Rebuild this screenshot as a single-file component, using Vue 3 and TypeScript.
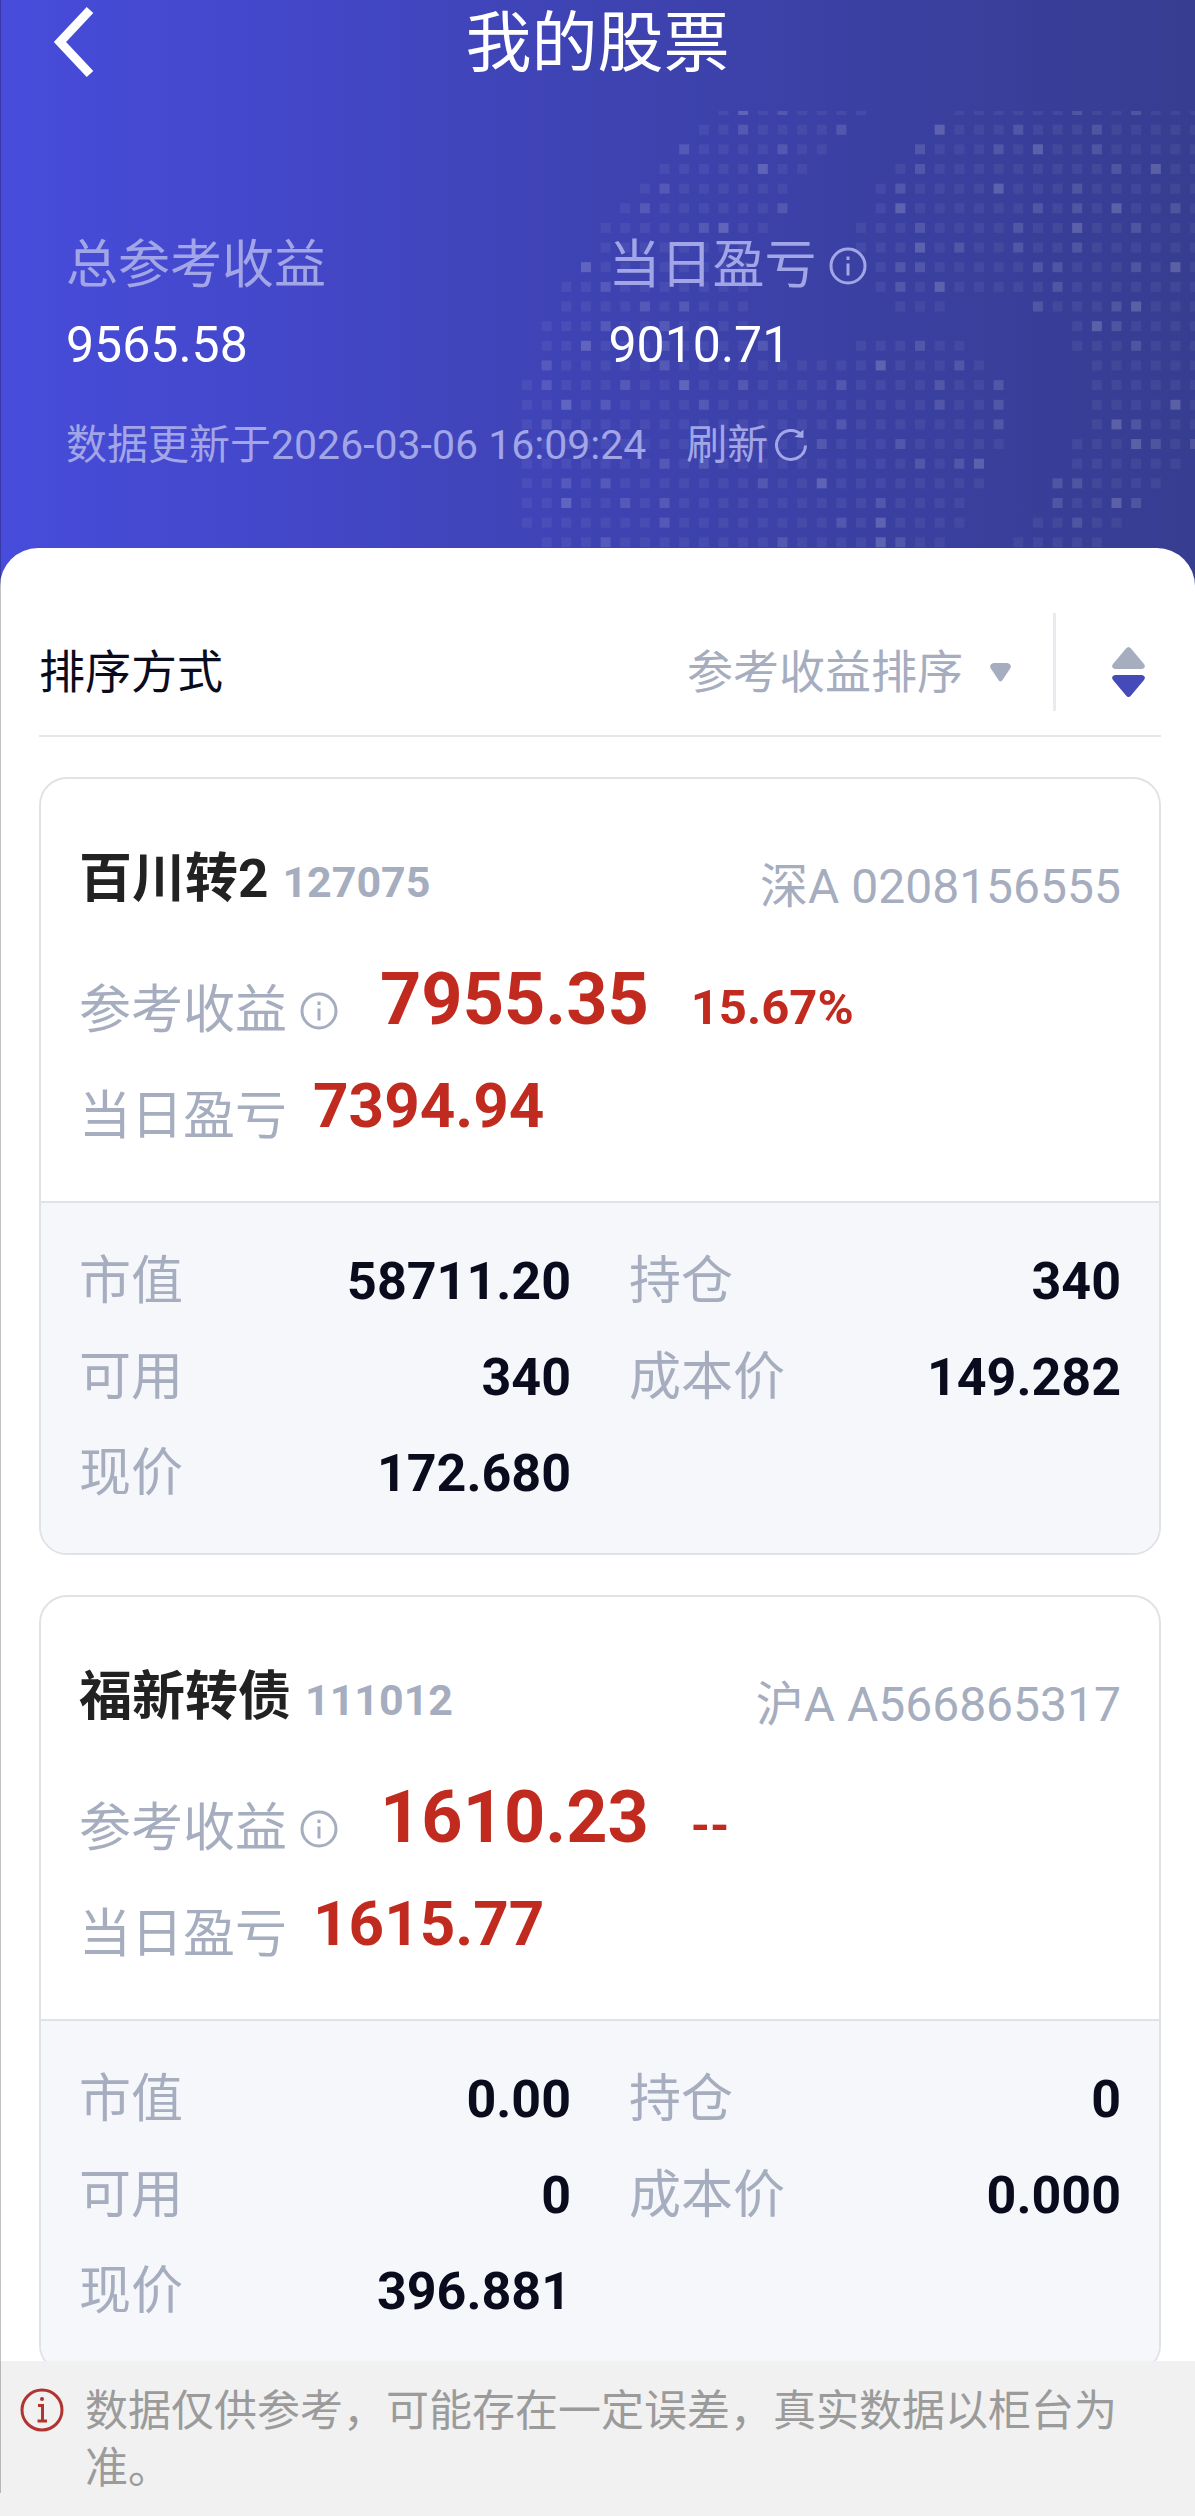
<script setup lang="ts">
import { ref } from 'vue'

interface Detail {
  label: string
  value: string
}

interface Holding {
  name: string
  code: string
  account: string
  profit: string
  rate: string
  daily: string
  details: Detail[]
}

const holdings: Holding[] = [
  {
    name: '百川转2',
    code: '127075',
    account: '深A 0208156555',
    profit: '7955.35',
    rate: '15.67%',
    daily: '7394.94',
    details: [
      { label: '市值', value: '58711.20' },
      { label: '持仓', value: '340' },
      { label: '可用', value: '340' },
      { label: '成本价', value: '149.282' },
      { label: '现价', value: '172.680' },
    ],
  },
  {
    name: '福新转债',
    code: '111012',
    account: '沪A A566865317',
    profit: '1610.23',
    rate: '--',
    daily: '1615.77',
    details: [
      { label: '市值', value: '0.00' },
      { label: '持仓', value: '0' },
      { label: '可用', value: '0' },
      { label: '成本价', value: '0.000' },
      { label: '现价', value: '396.881' },
    ],
  },
]

const sortKey = ref('profit')

// Pixel map behind the header: filled column runs per row, plus the lighter cells.
interface MapRow {
  runs: [number, number][]
  mid: number[]
  hi: number[]
}

const mapRows: MapRow[] = [
  { runs: [[10, 17], [22, 34]], mid: [13, 28, 31], hi: [11] },
  { runs: [[9, 16], [21, 34]], mid: [11, 16, 25, 29], hi: [21] },
  { runs: [[8, 15], [20, 34]], mid: [8, 13, 20, 24, 29], hi: [26] },
  { runs: [[7, 14], [19, 34]], mid: [20, 30], hi: [12, 32] },
  { runs: [[6, 13], [18, 34]], mid: [7, 19, 28], hi: [24] },
  { runs: [[5, 13], [18, 34]], mid: [6, 13, 26, 28, 33], hi: [19, 30] },
  { runs: [[4, 12], [17, 34]], mid: [9, 20, 25, 31], hi: [10, 28] },
  { runs: [[4, 11], [17, 34]], mid: [22, 25, 28], hi: [20] },
  { runs: [[3, 11], [18, 34]], mid: [19, 20, 26, 27, 31], hi: [3, 33] },
  { runs: [[2, 11], [18, 34]], mid: [4, 19, 27], hi: [21] },
  { runs: [[2, 11], [19, 21], [26, 34]], mid: [6, 8, 26, 30], hi: [31] },
  { runs: [[1, 11], [28, 34]], mid: [4, 7, 30], hi: [29] },
  { runs: [[1, 12], [17, 22], [28, 34]], mid: [7, 12, 20, 31], hi: [3] },
  { runs: [[1, 23], [29, 34]], mid: [1, 7, 22], hi: [18] },
  { runs: [[0, 24], [29, 34]], mid: [1, 5, 11, 16, 21, 24], hi: [8] },
  { runs: [[0, 24], [29, 34]], mid: [4, 9, 21, 24], hi: [2, 33] },
  { runs: [[0, 24], [29, 34]], mid: [1, 16, 24, 31], hi: [30] },
  { runs: [[0, 24], [28, 34]], mid: [15, 19, 32, 34], hi: [31] },
  { runs: [[0, 23], [28, 33]], mid: [7, 9, 20, 22], hi: [23] },
  { runs: [[0, 23], [27, 32]], mid: [2, 4, 12, 27, 28], hi: [15] },
  { runs: [[0, 22], [27, 31]], mid: [5, 7, 18, 27, 31], hi: [2, 30] },
  { runs: [[0, 22], [26, 30]], mid: [7, 16, 28], hi: [18] },
  { runs: [[1, 21], [25, 29]], mid: [4, 13, 19], hi: [18] },
]

const step = 19.65
const cells = mapRows.flatMap((row, r) =>
  row.runs.flatMap(([from, to]) =>
    Array.from({ length: to - from + 1 }, (_, i) => {
      const c = from + i
      return {
        key: `${r}-${c}`,
        x: 2 + c * step,
        y: -6 + r * step,
        opacity: row.hi.includes(c) ? 0.18 : row.mid.includes(c) ? 0.12 : 0.055,
      }
    }),
  ),
)
</script>

<template>
  <div class="page" lang="zh-CN">
    <header class="hero">
      <svg class="hero-map" viewBox="0 0 675 437" aria-hidden="true">
        <rect
          v-for="cell in cells"
          :key="cell.key"
          :x="cell.x"
          :y="cell.y"
          width="10"
          height="10"
          fill="#fff"
          :fill-opacity="cell.opacity"
        />
      </svg>

      <div class="topbar">
        <button class="back" type="button" aria-label="返回">
          <svg width="44" height="72" viewBox="0 0 44 72" fill="none">
            <path d="M38 4 8 36l30 32" stroke="#fff" stroke-width="9" />
          </svg>
        </button>
        <h1>我的股票</h1>
      </div>

      <div class="summary">
        <div>
          <div class="summary-label">总参考收益</div>
          <div class="summary-value">9565.58</div>
        </div>
        <div>
          <div class="summary-label">
            当日盈亏
            <svg class="info" viewBox="0 0 38 38" fill="none" stroke="currentColor" stroke-width="3">
              <circle cx="19" cy="19" r="17" />
              <path d="M19 16.500v12M19 9.500v3.500" />
            </svg>
          </div>
          <div class="summary-value">9010.71</div>
        </div>
      </div>

      <div class="updated">
        <span>数据更新于2026-03-06 16:09:24</span>
        <button class="refresh" type="button">
          刷新
          <svg width="34" height="34" viewBox="0 0 34 34" fill="none">
            <path d="M31.500 17.500A14.500 14.500 0 1 1 27.500 7" stroke="currentColor" stroke-width="3" />
            <path d="M29.500 1.500v8.500l-9-1z" fill="currentColor" />
          </svg>
        </button>
      </div>
    </header>

    <main class="sheet">
      <div class="toolbar">
        <label class="toolbar-label" for="sort">排序方式</label>
        <div class="sort-select">
          <select id="sort" v-model="sortKey">
            <option value="profit">参考收益排序</option>
          </select>
          <svg class="caret" width="21" height="19" viewBox="0 0 21 19" aria-hidden="true">
            <path d="M4 0h13q5 1 3.500 5L12.500 17q-2 3-4 0L.5 5Q-1 1 4 0z" fill="#a5adbf" />
          </svg>
        </div>
        <span class="rule"></span>
        <button class="order" type="button" aria-label="切换排序方向">
          <svg width="33" height="50" viewBox="0 0 33 50">
            <path d="M14 1.500q2.500-3 5 0L32 17q2.500 4-2 5H3q-4.500-1-2-5z" fill="#a5adbf" />
            <path d="M14 48.500q2.500 3 5 0L32 33q2.500-4-2-5H3q-4.500 1-2 5z" fill="#444bb8" />
          </svg>
        </button>
      </div>

      <article v-for="item in holdings" :key="item.code" class="card">
        <div class="card-main">
          <div class="card-head">
            <h2>
              {{ item.name }}<span class="code">{{ item.code }}</span>
            </h2>
            <span class="account">{{ item.account }}</span>
          </div>
          <div class="line profit">
            <span class="label">
              参考收益
              <svg class="info" viewBox="0 0 38 38" fill="none" stroke="currentColor" stroke-width="3">
                <circle cx="19" cy="19" r="17" />
                <path d="M19 16.500v12M19 9.500v3.500" />
              </svg>
            </span>
            <span class="amounts">
              <strong class="big">{{ item.profit }}</strong>
              <strong class="rate">{{ item.rate }}</strong>
            </span>
          </div>
          <div class="line daily">
            <span class="label">当日盈亏</span>
            <strong class="medium">{{ item.daily }}</strong>
          </div>
        </div>
        <dl class="details">
          <div v-for="detail in item.details" :key="detail.label" class="detail">
            <dt>{{ detail.label }}</dt>
            <dd>{{ detail.value }}</dd>
          </div>
        </dl>
      </article>
    </main>

    <footer class="notice">
      <svg class="notice-icon" width="44" height="44" viewBox="0 0 44 44" fill="none" stroke="#b03430">
        <circle cx="22" cy="22" r="20" stroke-width="3" />
        <path d="M18 17.500h4.500v15M17.500 33h9.500" stroke-width="3" />
        <circle cx="22" cy="11" r="2" fill="#b03430" stroke="none" />
      </svg>
      <p>数据仅供参考，可能存在一定误差，真实数据以柜台为准。</p>
    </footer>
  </div>
</template>

<style>
body {
  margin: 0;
  background: #fff;
}
</style>

<style scoped>
.page {
  position: relative;
  font-family: Roboto, "Noto Sans CJK SC", sans-serif;
  color: #0a0b1c;
  padding-bottom: 120px;
}

.page::after {
  content: "";
  position: absolute;
  inset: 0 auto 0 0;
  width: 1px;
  background: rgba(0, 0, 0, 0.24);
}

button,
select {
  font: inherit;
  color: inherit;
  background: none;
  border: 0;
  padding: 0;
  margin: 0;
}

h1,
h2,
p,
dl,
dd {
  margin: 0;
}

.hero {
  position: relative;
  padding-bottom: 115px;
  background: linear-gradient(90deg, #474cdb 0%, #4347c8 25%, #3e43b2 50%, #3a40a0 75%, #373d90 100%);
}

.hero-map {
  position: absolute;
  top: 111px;
  right: 0;
  width: 675px;
  height: 437px;
}

.topbar,
.summary,
.updated {
  position: relative;
}

.topbar {
  display: grid;
  grid-template-columns: 1fr auto 1fr;
  align-items: center;
  height: 88px;
}

.back {
  display: flex;
  align-self: start;
  justify-self: start;
  margin: 6px 0 0 52px;
}

h1 {
  font-size: 66px;
  line-height: 88px;
  font-weight: 400;
  color: #fff;
}

.summary {
  display: grid;
  grid-template-columns: 1fr 1fr;
  padding: 142px 44px 0 66px;
}

.summary-label {
  display: flex;
  align-items: center;
  gap: 12px;
  font-size: 52px;
  line-height: 72px;
  color: #a2a5e6;
}

.info {
  flex: none;
  width: 38px;
  height: 38px;
}

.summary-value {
  margin-top: 13px;
  font-size: 50px;
  line-height: 60px;
  color: #fff;
}

.updated {
  display: flex;
  align-items: center;
  gap: 40px;
  margin-top: 42px;
  padding-left: 66px;
  font-size: 41px;
  line-height: 56px;
  color: #a2a5e6;
}

.refresh {
  display: flex;
  align-items: center;
  gap: 6px;
}

.sheet {
  position: relative;
  display: flex;
  flex-direction: column;
  gap: 40px;
  margin-top: -40px;
  padding: 65px 34px 0 39px;
  border-radius: 38px 38px 0 0;
  background: #fff;
}

.toolbar {
  display: flex;
  height: 98px;
  padding-bottom: 24px;
  border-bottom: 2px solid #e5e8e9;
  font-size: 46px;
  line-height: 78px;
}

.toolbar-label,
.sort-select,
.order {
  display: flex;
  align-items: center;
  padding-top: 20px;
}

.sort-select {
  position: relative;
  margin-left: auto;
  color: #a5adbf;
}

.sort-select select {
  appearance: none;
  height: 78px;
  padding-right: 48px;
}

.caret {
  position: absolute;
  right: 0;
  pointer-events: none;
}

.rule {
  width: 3px;
  margin-left: 42px;
  background: #e8ebf0;
}

.order {
  padding-left: 56px;
  padding-right: 16px;
}

.card {
  border: 2px solid #dfe3e6;
  border-radius: 28px;
  overflow: hidden;
}

.card-main {
  padding: 64px 38px 53px;
}

.card-head {
  display: flex;
  justify-content: space-between;
  align-items: flex-end;
}

h2 {
  font-size: 53px;
  line-height: 72px;
  font-weight: 700;
  color: #222;
}

.code {
  margin-left: 14px;
  font-size: 43px;
  line-height: 1;
  color: #a5adbf;
}

.account {
  font-size: 48px;
  line-height: 56px;
  color: #a5adbf;
}

.line {
  display: flex;
  align-items: flex-end;
}

.profit {
  gap: 42px;
  margin-top: 43px;
}

.daily {
  gap: 26px;
  margin-top: 22px;
}

.label {
  display: flex;
  align-items: center;
  gap: 13px;
  font-size: 52px;
  line-height: 62px;
  color: #a5adbf;
}

.amounts {
  display: flex;
  align-items: baseline;
  gap: 42px;
}

.big,
.medium,
.rate {
  line-height: 84px;
  color: #c12b1f;
}

.big {
  font-size: 72px;
}

.medium {
  font-size: 62px;
}

.rate {
  font-size: 49px;
  line-height: 56px;
}

.details {
  display: grid;
  grid-template-columns: 1fr 1fr;
  column-gap: 58px;
  padding: 31px 38px;
  border-top: 2px solid #dfe3e6;
  background: #f5f7fb;
}

.detail {
  display: flex;
  justify-content: space-between;
  font-size: 52px;
  line-height: 96px;
}

dt {
  color: #a5adbf;
}

dd {
  font-weight: 700;
}

.notice {
  position: fixed;
  left: 0;
  right: 0;
  bottom: 0;
  display: flex;
  gap: 21px;
  padding: 22px 40px 19px 20px;
  background: #f1f1f1;
  font-size: 43px;
  line-height: 57px;
  color: #9b9b9b;
}

.notice-icon {
  flex: none;
  margin-top: 5px;
}
</style>
